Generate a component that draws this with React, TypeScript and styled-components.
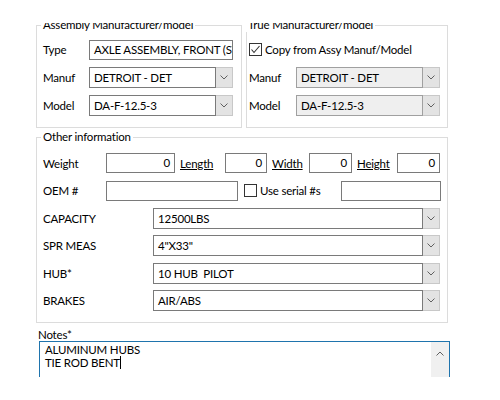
import React from 'react';
import styled, { createGlobalStyle } from 'styled-components';

const GlobalStyle = createGlobalStyle`
  html, body {
    margin: 0;
    padding: 0;
    background: #ffffff;
  }
  body {
    font-family: Lato, "Noto Sans", Arial, sans-serif;
    font-size: 11.5px;
    letter-spacing: -0.2px;
    color: #000000;
  }
`;

// the visible part of the dialog, cut off above and below
const Viewport = styled.div`
  width: 500px;
  margin-top: 23px;
  height: 354px;
  overflow: hidden;
`;

const Form = styled.div`
  margin-top: -5px;
  padding-left: 36px;
  display: flex;
  flex-direction: column;
`;

const TopRow = styled.div`
  display: flex;
  gap: 4px;
`;

const Group = styled.fieldset<{ $width: number; $pad: string }>`
  box-sizing: border-box;
  width: ${(p) => p.$width}px;
  margin: 0;
  padding: ${(p) => p.$pad};
  border: 1px solid #dcdcdc;
  min-width: 0;
`;

const Legend = styled.legend<{ $shift: number }>`
  padding: 0 2px;
  margin-left: ${(p) => p.$shift}px;
  line-height: 14px;
  color: #000;
`;

const FieldGrid = styled.div<{ $label: number; $gap: number }>`
  display: grid;
  grid-template-columns: ${(p) => p.$label}px 1fr;
  grid-auto-rows: 21px;
  row-gap: ${(p) => p.$gap}px;
  align-items: center;
`;

const Label = styled.span`
  white-space: nowrap;
  line-height: 14px;
`;

const TextBox = styled.div<{ $width?: number; $right?: boolean }>`
  box-sizing: border-box;
  height: 20px;
  width: ${(p) => (p.$width ? `${p.$width}px` : '100%')};
  flex: none;
  border: 1px solid #7a7a7a;
  background: #fff;
  padding: 0 4px;
  line-height: 18px;
  white-space: nowrap;
  overflow: hidden;
  text-align: ${(p) => (p.$right ? 'right' : 'left')};
`;

const Combo = styled.div`
  box-sizing: border-box;
  height: 21px;
  display: flex;
  width: 100%;
`;

const ComboText = styled.div<{ $disabled?: boolean }>`
  flex: 1;
  min-width: 0;
  border: 1px solid ${(p) => (p.$disabled ? '#a0a0a0' : '#7a7a7a')};
  background: ${(p) => (p.$disabled ? '#efefef' : '#fff')};
  padding: 0 4px;
  line-height: 19px;
  white-space: pre;
  overflow: hidden;
`;

const ComboButton = styled.div`
  box-sizing: border-box;
  width: 17px;
  flex: none;
  background: #e3e3e3;
  border: 1px solid #c8c8c8;
  border-left: none;
  display: flex;
  align-items: center;
  justify-content: center;
`;

const Chevron = ({ up }: { up?: boolean }) => (
  <svg width="8" height="5" viewBox="0 0 8 5">
    <polyline
      points={up ? '0.5,4.5 4,1 7.5,4.5' : '0.5,0.5 4,4 7.5,0.5'}
      fill="none"
      stroke="#606060"
      strokeWidth="1"
    />
  </svg>
);

const ComboBox = ({ value, disabled }: { value: string; disabled?: boolean }) => (
  <Combo>
    <ComboText $disabled={disabled}>{value}</ComboText>
    <ComboButton>
      <Chevron />
    </ComboButton>
  </Combo>
);

const CheckRow = styled.label`
  display: flex;
  align-items: center;
  gap: 3px;
  height: 21px;
  white-space: nowrap;
`;

const Box = styled.span`
  box-sizing: border-box;
  width: 13px;
  height: 13px;
  flex: none;
  border: 1px solid #333;
  background: #fff;
  display: flex;
  align-items: center;
  justify-content: center;
`;

const CheckBox = ({ checked }: { checked?: boolean }) => (
  <Box>
    {checked && (
      <svg width="11" height="11" viewBox="0 0 11 11">
        <polyline points="1.5,5.5 4,8.5 9.5,2" fill="none" stroke="#333" strokeWidth="1.1" />
      </svg>
    )}
  </Box>
);

const OtherRows = styled.div`
  display: flex;
  flex-direction: column;
  gap: 7.5px;
`;

const FlatRow = styled.div`
  display: flex;
  align-items: center;
  height: 20px;
`;

const RowLabel = styled.span<{ $width: number }>`
  width: ${(p) => p.$width}px;
  flex: none;
  white-space: nowrap;
`;

const LinkLabel = styled.span<{ $width: number }>`
  width: ${(p) => p.$width}px;
  flex: none;
  padding-left: 5px;
  box-sizing: border-box;
  text-decoration: underline;
  white-space: nowrap;
`;

const SerialCheck = styled(CheckRow)`
  width: 103px;
  flex: none;
  padding-left: 6px;
  box-sizing: border-box;
`;

const NotesLabel = styled.div`
  margin-top: 5px;
  margin-left: 2px;
  line-height: 13px;
`;

const Notes = styled.div`
  box-sizing: border-box;
  margin-left: 3px;
  width: 411px;
  height: 60px;
  border: 1px solid #1f74ad;
  display: flex;
`;

const NotesText = styled.div`
  flex: 1;
  padding: 1px 5px 0;
  line-height: 13px;
`;

const Caret = styled.span`
  display: inline-block;
  width: 1px;
  height: 13px;
  background: #000;
  vertical-align: -2px;
`;

const ScrollTrack = styled.div`
  width: 18px;
  background: #f0f0f0;
  display: flex;
  justify-content: center;
  padding-top: 9px;
  box-sizing: border-box;
`;

const combos: [string, string][] = [
  ['CAPACITY', '12500LBS'],
  ['SPR MEAS', '4"X33"'],
  ['HUB*', '10 HUB  PILOT'],
  ['BRAKES', 'AIR/ABS'],
];

export default function App() {
  return (
    <>
      <GlobalStyle />
      <Viewport>
        <Form>
          <TopRow>
            <Group $width={206} $pad="7px 8px 11px 6px">
              <Legend $shift={-2}>Assembly Manufacturer/model</Legend>
              <FieldGrid $label={46} $gap={7}>
                <Label>Type</Label>
                <TextBox>AXLE ASSEMBLY, FRONT (STEER)</TextBox>
                <Label>Manuf</Label>
                <ComboBox value="DETROIT - DET" />
                <Label>Model</Label>
                <ComboBox value="DA-F-12.5-3" />
              </FieldGrid>
            </Group>
            <Group $width={202} $pad="7px 7px 11px 2px">
              <Legend $shift={-3}>True Manufacturer/model</Legend>
              <FieldGrid $label={47} $gap={7}>
                <CheckRow style={{ gridColumn: '1 / span 2' }}>
                  <CheckBox checked />
                  Copy from Assy Manuf/Model
                </CheckRow>
                <Label>Manuf</Label>
                <ComboBox value="DETROIT - DET" disabled />
                <Label>Model</Label>
                <ComboBox value="DA-F-12.5-3" disabled />
              </FieldGrid>
            </Group>
          </TopRow>

          <Group $width={412} $pad="9px 7px 11px 6px" style={{ marginTop: 2 }}>
            <Legend $shift={-2}>Other information</Legend>
            <OtherRows>
              <FlatRow>
                <RowLabel $width={63}>Weight</RowLabel>
                <TextBox $width={69} $right>0</TextBox>
                <LinkLabel $width={50}>Length</LinkLabel>
                <TextBox $width={42} $right>0</TextBox>
                <LinkLabel $width={42}>Width</LinkLabel>
                <TextBox $width={43} $right>0</TextBox>
                <LinkLabel $width={45}>Height</LinkLabel>
                <TextBox $width={43} $right>0</TextBox>
              </FlatRow>
              <FlatRow>
                <RowLabel $width={63}>OEM #</RowLabel>
                <TextBox $width={132} />
                <SerialCheck>
                  <CheckBox />
                  Use serial #s
                </SerialCheck>
                <TextBox $width={100} />
              </FlatRow>
              {combos.map(([label, value]) => (
                <FlatRow key={label}>
                  <RowLabel $width={110}>{label}</RowLabel>
                  <ComboBox value={value} />
                </FlatRow>
              ))}
            </OtherRows>
          </Group>

          <NotesLabel>Notes*</NotesLabel>
          <Notes>
            <NotesText>
              ALUMINUM HUBS
              <br />
              TIE ROD BENT
              <Caret />
            </NotesText>
            <ScrollTrack>
              <Chevron up />
            </ScrollTrack>
          </Notes>
        </Form>
      </Viewport>
    </>
  );
}
